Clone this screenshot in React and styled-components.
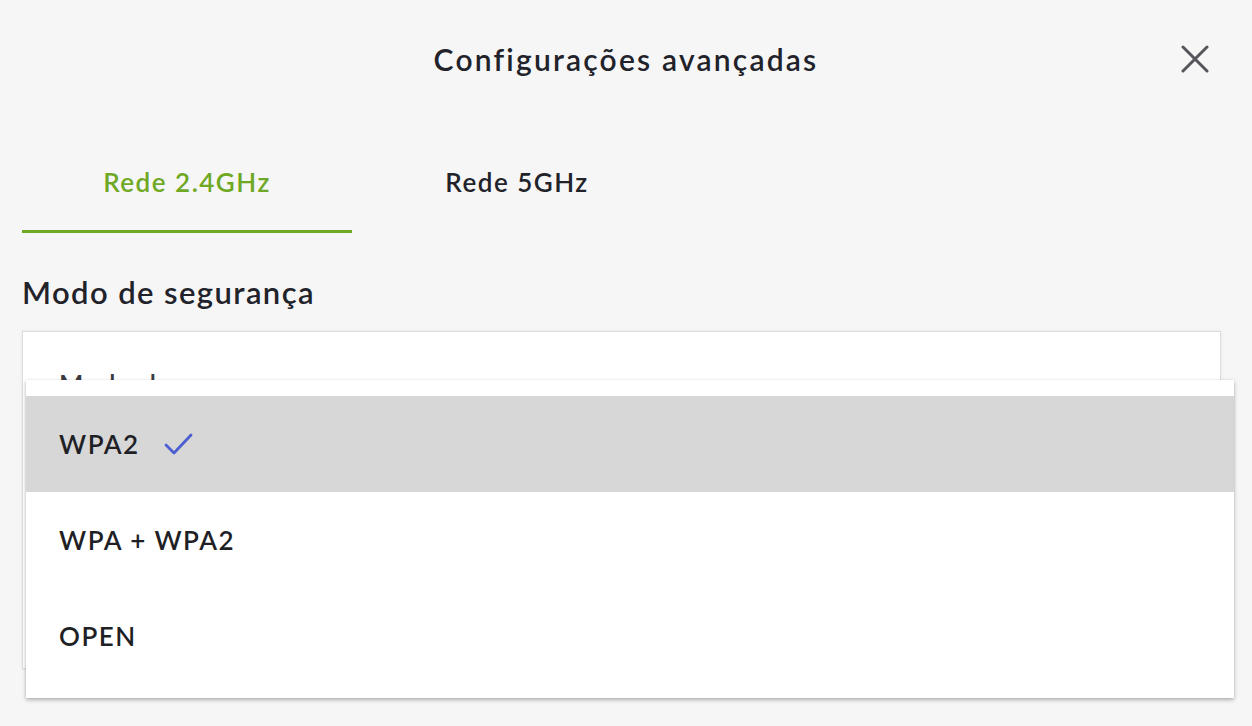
import React, { useState } from 'react';
import styled, { createGlobalStyle } from 'styled-components';

const GlobalStyle = createGlobalStyle`
  html, body {
    margin: 0;
    padding: 0;
    background: #f6f6f6;
  }
  body {
    font-family: Lato, "Noto Sans", sans-serif;
    color: #1f1f26;
  }
`;

const Page = styled.div`
  width: 1252px;
  height: 726px;
  box-sizing: border-box;
  padding: 0 22px;
  background: #f6f6f6;
  overflow: hidden;
`;

const Header = styled.header`
  display: grid;
  grid-template-columns: 1fr auto 1fr;
  align-items: center;
  height: 118px;
`;

const Title = styled.h1`
  grid-column: 2;
  margin: 0;
  font-size: 30px;
  font-weight: 600;
  letter-spacing: 2.2px;
  color: #22222a;
`;

const CloseButton = styled.button`
  justify-self: end;
  margin-right: 18px;
  width: 34px;
  height: 34px;
  padding: 0;
  border: none;
  background: none;
  display: flex;
  align-items: center;
  justify-content: center;
  cursor: pointer;
`;

const Tabs = styled.div`
  display: flex;
  margin-top: 19px;
`;

const Tab = styled.button`
  width: 330px;
  height: 96px;
  box-sizing: border-box;
  padding: 0 0 3px;
  border: none;
  border-bottom: 3px solid ${p => (p.$active ? '#6ea824' : 'transparent')};
  background: none;
  font-family: Lato, "Noto Sans", sans-serif;
  font-size: 26px;
  font-weight: 600;
  letter-spacing: 1.5px;
  color: ${p => (p.$active ? '#6ea824' : '#22222a')};
  cursor: pointer;
`;

const Label = styled.div`
  margin-top: 40px;
  font-size: 31px;
  font-weight: 600;
  letter-spacing: 1.4px;
  color: #22222a;
  line-height: 38px;
`;

const SelectWrap = styled.div`
  position: relative;
  margin-top: 20px;
  width: 1199px;
`;

const SelectBox = styled.div`
  height: 338px;
  box-sizing: border-box;
  background: #fff;
  border: 1px solid #dedde2;
  box-shadow: 0 0 3px rgba(0, 0, 0, 0.08);
  padding: 36px 36px 0;
  font-size: 26px;
  font-weight: 600;
  letter-spacing: 1.5px;
  color: #3a3a40;
`;

const Dropdown = styled.ul`
  position: absolute;
  top: 49px;
  left: 4px;
  width: 1208px;
  margin: 0;
  padding: 16px 0 14px;
  list-style: none;
  background: #fff;
  box-shadow: 0 2px 4px rgba(0, 0, 0, 0.28), 0 0 2px rgba(0, 0, 0, 0.08);
`;

const Option = styled.li`
  display: flex;
  align-items: center;
  gap: 24px;
  height: 96px;
  padding-left: 33px;
  background: ${p => (p.$selected ? '#d7d7d7' : '#fff')};
  font-size: 26px;
  font-weight: 600;
  letter-spacing: 1.5px;
  color: #1f1f26;
  cursor: pointer;
`;

const Check = () => (
  <svg width="30" height="24" viewBox="0 0 30 24" fill="none">
    <polyline points="2,13 10,21 27,3" stroke="#4c5fd0" strokeWidth="2.8" strokeLinecap="round" strokeLinejoin="round" />
  </svg>
);

const CloseIcon = () => (
  <svg width="28" height="28" viewBox="0 0 28 28" fill="none">
    <path d="M2 2 L26 26 M26 2 L2 26" stroke="#55555c" strokeWidth="3" strokeLinecap="round" />
  </svg>
);

const options = ['WPA2', 'WPA + WPA2', 'OPEN'];

const App = () => {
  const [tab, setTab] = useState(0);
  const [mode, setMode] = useState('WPA2');

  return (
    <Page>
      <GlobalStyle />
      <Header>
        <Title>Configurações avançadas</Title>
        <CloseButton aria-label="Fechar">
          <CloseIcon />
        </CloseButton>
      </Header>

      <Tabs>
        <Tab $active={tab === 0} onClick={() => setTab(0)}>Rede 2.4GHz</Tab>
        <Tab $active={tab === 1} onClick={() => setTab(1)}>Rede 5GHz</Tab>
      </Tabs>

      <Label>Modo de segurança</Label>

      <SelectWrap>
        <SelectBox>Modo de segurança</SelectBox>
        <Dropdown>
          {options.map(o => (
            <Option key={o} $selected={o === mode} onClick={() => setMode(o)}>
              {o}
              {o === mode && <Check />}
            </Option>
          ))}
        </Dropdown>
      </SelectWrap>
    </Page>
  );
};

export default App;
